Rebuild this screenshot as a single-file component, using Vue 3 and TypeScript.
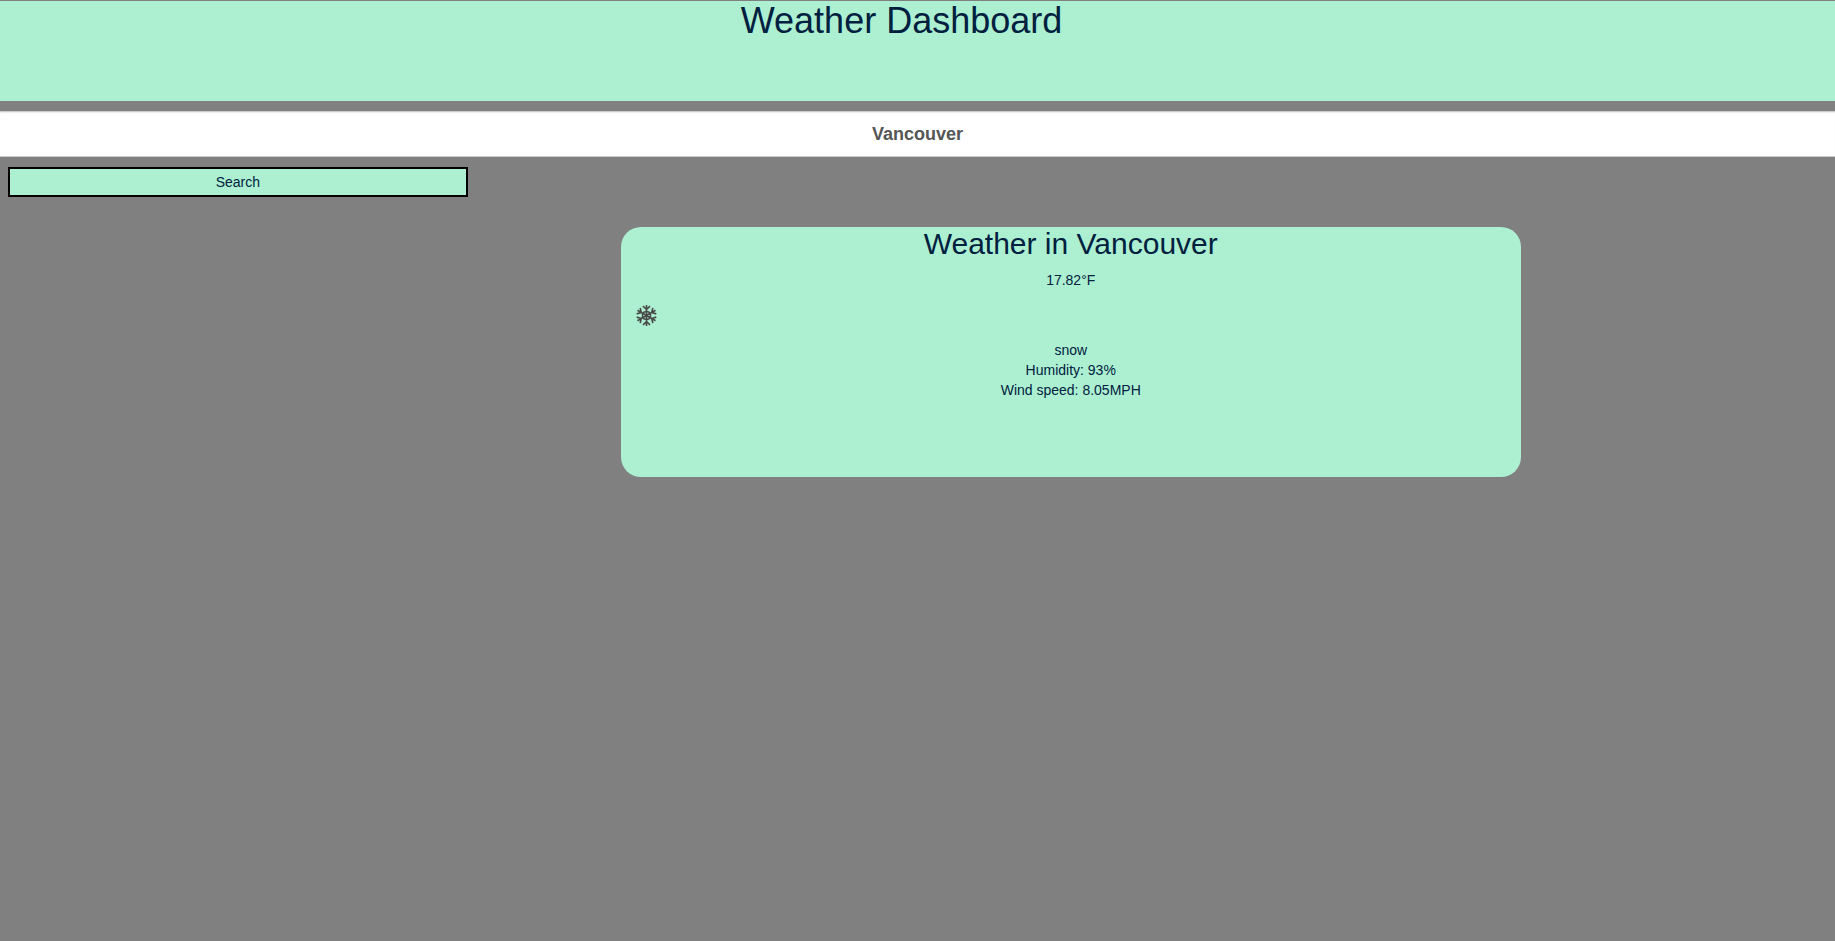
<script setup lang="ts">
import { ref } from 'vue'

interface Weather {
  city: string
  temperature: string
  description: string
  humidity: number
  windSpeed: number
}

const city = ref<string>('Vancouver')
const weather = ref<Weather>({
  city: 'Vancouver',
  temperature: '17.82',
  description: 'snow',
  humidity: 93,
  windSpeed: 8.05,
})
const arms: number[] = [0, 60, 120, 180, 240, 300]

function search(): void {
  weather.value = { ...weather.value, city: city.value }
}
</script>

<template>
  <div class="page">
    <header class="banner">
      <h1>Weather Dashboard</h1>
    </header>
    <form class="search" @submit.prevent="search">
      <input v-model="city" class="city" type="text" aria-label="City" autocomplete="off" />
      <button class="submit" type="submit">Search</button>
    </form>
    <main class="card">
      <h2>Weather in {{ weather.city }}</h2>
      <p>{{ weather.temperature }}°F</p>
      <svg class="icon" viewBox="-25.5 -25.5 50 50" aria-hidden="true">
        <g v-for="angle in arms" :key="angle" :transform="`rotate(${angle})`">
          <path d="M0 0V-10.4M-3.5 -9.3L0 -6L3.5 -9.3M-2.2 -3.8H2.2" />
        </g>
      </svg>
      <p>{{ weather.description }}</p>
      <p>Humidity: {{ weather.humidity }}%</p>
      <p>Wind speed: {{ weather.windSpeed }}MPH</p>
    </main>
  </div>
</template>

<style>
html,
body {
  margin: 0;
  background: #808080;
}
</style>

<style scoped>
.page,
.page * {
  box-sizing: border-box;
}

.page {
  padding-top: 1px;
  color: #00203f;
  font-family: "Liberation Sans", Arial, sans-serif;
  font-size: 14px;
  line-height: 20px;
  text-align: center;
}

.banner {
  min-height: 100px;
  padding-right: 32px;
  background: #adf0d1;
}

h1,
h2 {
  margin: 0;
  font-weight: 500;
}

h1 {
  font-size: 36px;
  line-height: 40px;
}

h2 {
  margin-bottom: 10px;
  font-size: 30px;
  line-height: 33px;
}

p {
  margin: 0;
}

.search {
  display: flex;
  flex-direction: column;
  align-items: flex-start;
  gap: 10px;
  margin-top: 10px;
}

.city {
  width: 100%;
  height: 46px;
  padding: 10px 16px;
  border: solid #ccc;
  border-width: 1px 0;
  border-radius: 0;
  outline: none;
  background: #fff;
  box-shadow: inset 0 1px 1px rgba(0, 0, 0, 0.075);
  color: #555;
  font-family: inherit;
  font-size: 18px;
  font-weight: 700;
  line-height: 24px;
  text-align: center;
}

.submit {
  width: calc(25% + 1px);
  height: 30px;
  margin-left: 8px;
  padding: 0;
  border: 2px solid #000;
  border-radius: 0;
  background: #adf0d1;
  color: inherit;
  font: inherit;
  cursor: pointer;
}

.card {
  width: calc(49% + 1px);
  min-height: 250px;
  margin: 30px 0 0 calc(100% / 3 + 9px);
  border-radius: 20px;
  background: #adf0d1;
}

.icon {
  display: block;
  width: 50px;
  height: 50px;
  fill: none;
  stroke: #484848;
  stroke-width: 1.6;
}
</style>
